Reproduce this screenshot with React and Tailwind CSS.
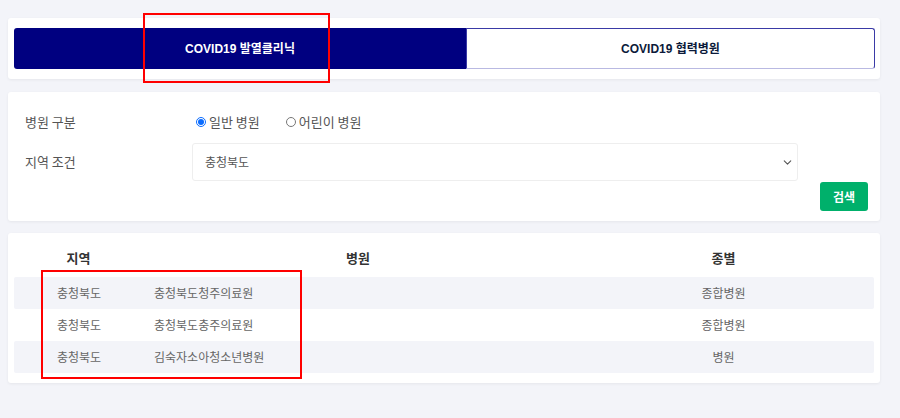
import { ChevronDown } from 'lucide-react'

const rows = [
  { region: '충청북도', name: '충청북도청주의료원', kind: '종합병원' },
  { region: '충청북도', name: '충청북도충주의료원', kind: '종합병원' },
  { region: '충청북도', name: '김숙자소아청소년병원', kind: '병원' },
]

function Radio({ checked, label }) {
  return (
    <label className="flex items-center gap-[3px] text-[13px] text-[#555]">
      {checked ? (
        <span className="flex h-[10px] w-[10px] items-center justify-center rounded-full border border-[#0a6cff] bg-white">
          <span className="h-[6px] w-[6px] rounded-full bg-[#0a6cff]" />
        </span>
      ) : (
        <span className="h-[10px] w-[10px] rounded-full border border-[#777] bg-white" />
      )}
      {label}
    </label>
  )
}

export default function App() {
  return (
    <div
      className="relative h-[418px] w-[900px] overflow-hidden bg-[#f3f4f9] pl-[8px] pr-[20px] pt-[18px]"
      style={{ fontFamily: '"Liberation Sans", "Noto Sans CJK KR", sans-serif' }}
    >
      {/* Tabs */}
      <div className="flex rounded-[3px] bg-white pl-[6px] pr-[5px] py-[10px] shadow-[0_1px_3px_rgba(0,0,0,0.06)]">
        <button className="flex h-[41px] w-[452px] items-center justify-center rounded-l-[3px] bg-[#000080] text-[12px] font-bold text-white">
          COVID19 발열클리닉
        </button>
        <button className="flex h-[41px] flex-1 items-center justify-center rounded-r-[3px] border border-[#3a3aa6] border-b-[#b9b9e2] bg-white text-[12px] font-bold text-[#0b1a3a]">
          COVID19 협력병원
        </button>
      </div>

      {/* Search form */}
      <div
        className="mt-[13px] rounded-[3px] bg-white pb-[10px] pl-[17px] pr-[12px] pt-[20px] shadow-[0_1px_3px_rgba(0,0,0,0.06)]"
        style={{ fontFamily: '"Noto Sans CJK KR", sans-serif' }}
      >
        <div className="flex h-[20px] items-center">
          <div className="w-[167px] text-[13px] text-[#555]">병원 구분</div>
          <div className="ml-[4px] flex items-center gap-[26px]">
            <Radio checked label="일반 병원" />
            <Radio label="어린이 병원" />
          </div>
        </div>
        <div className="mt-[11px] flex items-center">
          <div className="w-[167px] text-[13px] text-[#555]">지역 조건</div>
          <div className="flex h-[38px] w-[606px] items-center justify-between rounded-[3px] border border-[#eeeeee] pl-[12px] pr-[3px] text-[12px] text-[#555]">
            <span>충청북도</span>
            <ChevronDown size={13} strokeWidth={2} className="text-[#555]" />
          </div>
        </div>
        <div className="mt-[1px] flex justify-end">
          <button className="flex h-[29px] w-[48px] items-center justify-center rounded-[3px] bg-[#00b06b] text-[12px] font-bold text-white">
            검색
          </button>
        </div>
      </div>

      {/* Results */}
      <div
        className="mt-[12px] rounded-[3px] bg-white px-[6px] pb-[10px] pt-[12px] shadow-[0_1px_3px_rgba(0,0,0,0.06)]"
        style={{ fontFamily: '"Noto Sans CJK KR", sans-serif' }}
      >
        <div className="mb-[6px] grid h-[26px] grid-cols-[129px_430px_1fr] items-center text-center text-[13px] font-bold text-[#333]">
          <div>지역</div>
          <div>병원</div>
          <div>종별</div>
        </div>
        {rows.map((r, i) => (
          <div
            key={r.name}
            className={`grid h-[32px] grid-cols-[129px_430px_1fr] items-center rounded-[2px] text-[12px] text-[#666] ${i % 2 === 0 ? 'bg-[#f3f4f9]' : 'bg-white'}`}
          >
            <div className="pl-[43px]">{r.region}</div>
            <div className="pl-[11px]">{r.name}</div>
            <div className="text-center">{r.kind}</div>
          </div>
        ))}
      </div>

      {/* annotation boxes */}
      <div className="pointer-events-none absolute left-[143px] top-[13px] h-[70px] w-[187px] border-2 border-[#ff0000]" />
      <div className="pointer-events-none absolute left-[41px] top-[270px] h-[109px] w-[261px] border-2 border-[#ff0000]" />
    </div>
  )
}
